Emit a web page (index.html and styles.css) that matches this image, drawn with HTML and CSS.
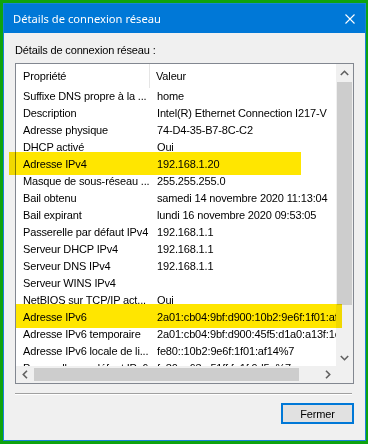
FILE: index.html
```html
<!DOCTYPE html>
<html lang="fr">
<head>
<meta charset="utf-8">
<title>Détails de connexion réseau</title>
<link rel="stylesheet" href="styles.css">
</head>
<body>
<div class="window">
  <div class="titlebar">
    <span class="title">Détails de connexion réseau</span>
    <svg class="close" width="10" height="10" viewBox="0 0 10 10"><path d="M0.5 0.5 L9.5 9.5 M9.5 0.5 L0.5 9.5" stroke="#fff" stroke-width="1.1" fill="none"/></svg>
  </div>
  <div class="content">
    <div class="label">Détails de connexion réseau :</div>
    <div class="list">
      <div class="viewport">
        <div class="row header"><div class="c1">Propriété</div><div class="c2">Valeur</div></div>
        <div class="row"><div class="c1">Suffixe DNS propre à la ...</div><div class="c2">home</div></div>
        <div class="row"><div class="c1">Description</div><div class="c2">Intel(R) Ethernet Connection I217-V</div></div>
        <div class="row"><div class="c1">Adresse physique</div><div class="c2">74-D4-35-B7-8C-C2</div></div>
        <div class="row"><div class="c1">DHCP activé</div><div class="c2">Oui</div></div>
        <div class="row"><div class="c1">Adresse IPv4</div><div class="c2">192.168.1.20</div></div>
        <div class="row"><div class="c1">Masque de sous-réseau ...</div><div class="c2">255.255.255.0</div></div>
        <div class="row"><div class="c1">Bail obtenu</div><div class="c2">samedi 14 novembre 2020 11:13:04</div></div>
        <div class="row"><div class="c1">Bail expirant</div><div class="c2">lundi 16 novembre 2020 09:53:05</div></div>
        <div class="row"><div class="c1">Passerelle par défaut IPv4</div><div class="c2">192.168.1.1</div></div>
        <div class="row"><div class="c1">Serveur DHCP IPv4</div><div class="c2">192.168.1.1</div></div>
        <div class="row"><div class="c1">Serveur DNS IPv4</div><div class="c2">192.168.1.1</div></div>
        <div class="row"><div class="c1">Serveur WINS IPv4</div><div class="c2"></div></div>
        <div class="row"><div class="c1">NetBIOS sur TCP/IP act...</div><div class="c2">Oui</div></div>
        <div class="row"><div class="c1">Adresse IPv6</div><div class="c2">2a01:cb04:9bf:d900:10b2:9e6f:1f01:af14</div></div>
        <div class="row"><div class="c1">Adresse IPv6 temporaire</div><div class="c2">2a01:cb04:9bf:d900:45f5:d1a0:a13f:1c2e</div></div>
        <div class="row"><div class="c1">Adresse IPv6 locale de li...</div><div class="c2">fe80::10b2:9e6f:1f01:af14%7</div></div>
        <div class="row"><div class="c1">Passerelle par défaut IPv6</div><div class="c2">fe80::a63e:51ff:fe1f:9d5e%7</div></div>
      </div>
      <div class="vscroll">
        <div class="arrow"><svg width="9" height="6" viewBox="0 0 9 6"><polyline points="0.8,5 4.5,1.3 8.2,5" fill="none" stroke="#606060" stroke-width="1.6"/></svg></div>
        <div class="vtrack"><div class="vthumb"></div></div>
        <div class="arrow"><svg width="9" height="6" viewBox="0 0 9 6"><polyline points="0.8,1 4.5,4.7 8.2,1" fill="none" stroke="#606060" stroke-width="1.6"/></svg></div>
      </div>
      <div class="hscroll">
        <div class="arrow"><svg width="6" height="9" viewBox="0 0 6 9"><polyline points="5,0.8 1.3,4.5 5,8.2" fill="none" stroke="#606060" stroke-width="1.6"/></svg></div>
        <div class="htrack"><div class="hthumb"></div></div>
        <div class="arrow"><svg width="6" height="9" viewBox="0 0 6 9"><polyline points="1,0.8 4.7,4.5 1,8.2" fill="none" stroke="#606060" stroke-width="1.6"/></svg></div>
      </div>
      <div class="corner"></div>
    </div>
    <div class="separator"></div>
    <div class="buttons"><button class="btn">Fermer</button></div>
  </div>
</div>
<div class="mark mark-ipv4"></div>
<div class="mark mark-ipv6"></div>
</body>
</html>
```
FILE: styles.css
```css
html, body {
  margin: 0;
  padding: 0;
}
body {
  position: relative;
  width: 368px;
  height: 444px;
  box-sizing: border-box;
  padding: 3px 2px 3px 3px;
  background: #0fa30f;
  font-family: "Liberation Sans", Arial, sans-serif;
  font-size: 11px;
  letter-spacing: -0.15px;
  color: #000;
  overflow: hidden;
}
.window {
  width: 363px;
  height: 438px;
  box-sizing: border-box;
  border: 1px solid #1883d7;
  display: flex;
  flex-direction: column;
  background: #f0f0f0;
}
.titlebar {
  height: 29px;
  flex: none;
  background: #0078d7;
  display: flex;
  align-items: center;
  justify-content: space-between;
  padding: 0 10px 0 9px;
}
.title {
  color: #fff;
  font-family: "Noto Sans", "Open Sans", sans-serif;
  font-size: 11.2px;
  letter-spacing: 0;
  line-height: 16px;
  margin-top: 1px;
}
.close {
  display: block;
  margin-top: 1px;
}
.content {
  flex: 1;
  padding: 11px 11px 0 11px;
  display: flex;
  flex-direction: column;
}
.label {
  height: 13px;
  line-height: 13px;
}
.list {
  margin-top: 6px;
  height: 321px;
  box-sizing: border-box;
  border: 1px solid #828790;
  background: #fff;
  display: grid;
  grid-template-columns: 1fr 17px;
  grid-template-rows: 1fr 17px;
}
.viewport {
  overflow: hidden;
  min-width: 0;
}
.row {
  display: flex;
  height: 17px;
  line-height: 17px;
  white-space: nowrap;
}
.row.header {
  height: 24px;
  line-height: 24px;
}
.c1 {
  width: 134px;
  flex: none;
  box-sizing: border-box;
  padding-left: 7px;
  overflow: hidden;
}
.c2 {
  flex: none;
  box-sizing: border-box;
  padding-left: 7px;
  width: 240px;
  overflow: hidden;
}
.header .c1 {
  border-right: 1px solid #e5e5e5;
}
.header .c2 {
  padding-left: 6px;
}
.vscroll {
  background: #f0f0f0;
  display: flex;
  flex-direction: column;
}
.vscroll .arrow {
  height: 17px;
  flex: none;
  display: flex;
  align-items: center;
  justify-content: center;
}
.vtrack {
  flex: 1;
  padding: 1px 1px 0 1px;
}
.vthumb {
  height: 223px;
  background: #cdcdcd;
}
.hscroll {
  background: #f0f0f0;
  display: flex;
}
.hscroll .arrow {
  width: 17px;
  flex: none;
  display: flex;
  align-items: center;
  justify-content: center;
}
.htrack {
  flex: 1;
  padding: 2px 0 2px 1px;
}
.hthumb {
  width: 265px;
  height: 13px;
  background: #cdcdcd;
}
.corner {
  background: #f0f0f0;
}
.separator {
  margin-top: 9px;
  margin-right: 2px;
  height: 1px;
  border-top: 1px solid #a0a0a0;
  background: #fff;
}
.buttons {
  margin-top: 8px;
  display: flex;
  justify-content: flex-end;
}
.btn {
  width: 73px;
  height: 21px;
  box-sizing: border-box;
  border: 2px solid #0078d7;
  background: #e1e1e1;
  font-family: "Liberation Sans", Arial, sans-serif;
  font-size: 11px;
  letter-spacing: -0.15px;
  color: #000;
  padding: 0;
  margin: 0;
}
.mark {
  position: absolute;
  background: #ffe600;
  mix-blend-mode: multiply;
}
.mark-ipv4 {
  left: 9px;
  top: 152px;
  width: 292px;
  height: 23px;
}
.mark-ipv6 {
  left: 16px;
  top: 304px;
  width: 326px;
  height: 24px;
}
```
